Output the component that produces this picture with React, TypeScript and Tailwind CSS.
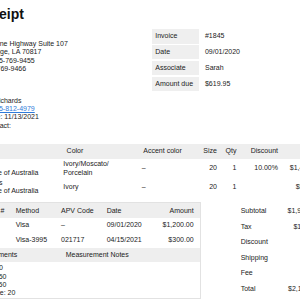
export default function App() {
  const info = [
    ["Invoice", "#1845"],
    ["Date", "09/01/2020"],
    ["Associate", "Sarah"],
    ["Amount due", "$619.95"],
  ];
  const totals = [
    ["Subtotal", "$1,944.00"],
    ["Tax", "$175.95"],
    ["Discount", ""],
    ["Shipping", ""],
    ["Fee", ""],
    ["Total", "$2,119.95"],
  ];
  const itemCols = "grid grid-cols-[92.3px_78.4px_62.3px_21px_19.5px_41.5px_43px] items-center";
  const payCols = "grid grid-cols-[44.7px_45.3px_45.7px_47.3px_50px] items-center";
  return (
    <div className="w-[300px] h-[300px] overflow-hidden bg-white text-[#222] font-['Liberation_Sans',Arial,sans-serif] text-[7px] leading-[8.33px]">
      <div className="ml-[-33px] w-[358px]">
        <div className="flex">
          <div className="w-[181px] shrink-0">
            <h1 className="ml-[6.3px] pt-[5.5px] text-[14px] leading-[16px] font-bold text-[#111]">Receipt</h1>
            <div className="mt-[18.4px]">
              <div className="whitespace-nowrap">10455 Airline Highway Suite 107</div>
              <div className="whitespace-nowrap">Baton Rouge, LA 70817</div>
              <div className="whitespace-nowrap">Phone: 225-769-9455</div>
              <div className="whitespace-nowrap">Fax: 225-769-9466</div>
            </div>
            <div className="mt-[23.4px]">
              <div className="whitespace-nowrap">Jennifer Richards</div>
              <div className="whitespace-nowrap">
                Phone: <span className="text-[#2f7bd9] underline">225-812-4979</span>
              </div>
              <div className="whitespace-nowrap">Event date: 11/13/2021</div>
              <div className="whitespace-nowrap">Other contact:</div>
            </div>
          </div>
          <div className="ml-[3.7px] pt-[29.3px] flex flex-col gap-[1.5px]">
            {info.map(([k, v]) => (
              <div key={k} className="flex h-[14.3px] items-center">
                <div className="w-[47.6px] h-full bg-[#efefef] pl-[3.6px] flex items-center">{k}</div>
                <div className="pl-[5.7px] whitespace-nowrap">{v}</div>
              </div>
            ))}
          </div>
        </div>

        <div className="mt-[13.6px]">
          <div className={`${itemCols} h-[15px] bg-[#eeeeee]`}>
            <div className="pl-[8px]">Item</div>
            <div className="pl-[7.3px]">Color</div>
            <div className="pl-[5.6px]">Accent color</div>
            <div className="pr-[4px] text-right">Size</div>
            <div className="pr-[4px] text-right">Qty</div>
            <div className="pr-[4px] text-right">Discount</div>
            <div className="pr-[4px] text-right">Price</div>
          </div>
          <div className={`${itemCols} pt-[1.7px] pb-[0.3px]`}>
            <div className="pl-[8px]">
              <div>Gown</div>
              <div className="whitespace-nowrap">Essense of Australia</div>
            </div>
            <div className="pl-[4px]">
              <div>Ivory/Moscato/</div>
              <div>Porcelain</div>
            </div>
            <div className="pl-[4px]">–</div>
            <div className="pr-[4px] text-right">20</div>
            <div className="pr-[4px] text-right">1</div>
            <div className="pr-[4px] text-right">10.00%</div>
            <div className="pr-[4px] text-right">$1,440.00</div>
          </div>
          <div className={`${itemCols} pt-[1.7px] pb-[0.3px]`}>
            <div className="pl-[8px]">
              <div>Overlays</div>
              <div className="whitespace-nowrap">Essense of Australia</div>
            </div>
            <div className="pl-[4px]">Ivory</div>
            <div className="pl-[4px]">–</div>
            <div className="pr-[4px] text-right">20</div>
            <div className="pr-[4px] text-right">1</div>
            <div className="pr-[4px] text-right"></div>
            <div className="pr-[4px] text-right">$504.00</div>
          </div>
        </div>

        <div className="mt-[6.7px] flex items-start">
          <div className="w-[234px] shrink-0 border border-[#e2e2e2]">
            <div className={`${payCols} h-[14.5px] bg-[#eeeeee]`}>
              <div className="pl-[3px] whitespace-nowrap">Payment #</div>
              <div className="pl-[3px]">Method</div>
              <div className="pl-[3px]">APV Code</div>
              <div className="pl-[3px]">Date</div>
              <div className="pr-[7.3px] text-right">Amount</div>
            </div>
            <div className={`${payCols} h-[15px]`}>
              <div className="pl-[3px]">1</div>
              <div className="pl-[3px]">Visa</div>
              <div className="pl-[3px]">–</div>
              <div className="pl-[3px]">09/01/2020</div>
              <div className="pr-[7.3px] text-right">$1,200.00</div>
            </div>
            <div className={`${payCols} h-[15px]`}>
              <div className="pl-[3px]">2</div>
              <div className="pl-[3px]">Visa-3995</div>
              <div className="pl-[3px]">021717</div>
              <div className="pl-[3px]">04/15/2021</div>
              <div className="pr-[7.3px] text-right">$300.00</div>
            </div>
            <div className="grid grid-cols-[94.7px_138.3px] h-[14px] items-center bg-[#eeeeee]">
              <div className="pl-[3px]">Measurements</div>
              <div className="pl-[3px]">Measurement Notes</div>
            </div>
            <div className="grid grid-cols-[94.7px_138.3px] pt-[2.5px] pb-[0.7px]">
              <div className="pl-[3px]">
                <div className="whitespace-nowrap">Hip: 42.00</div>
                <div className="whitespace-nowrap">Bust: 38.50</div>
                <div className="whitespace-nowrap">Hips: 40.50</div>
                <div className="whitespace-nowrap">Dress size: 20</div>
              </div>
              <div></div>
            </div>
          </div>
          <div className="ml-[35.7px] mt-[1px] flex flex-col">
            {totals.map(([k, v]) => (
              <div key={k} className="grid grid-cols-[50px_36px] h-[15.5px] items-center">
                <div className="pl-[4px]">{k}</div>
                <div className="pr-[4px] text-right whitespace-nowrap">{v}</div>
              </div>
            ))}
          </div>
        </div>
      </div>
    </div>
  );
}
